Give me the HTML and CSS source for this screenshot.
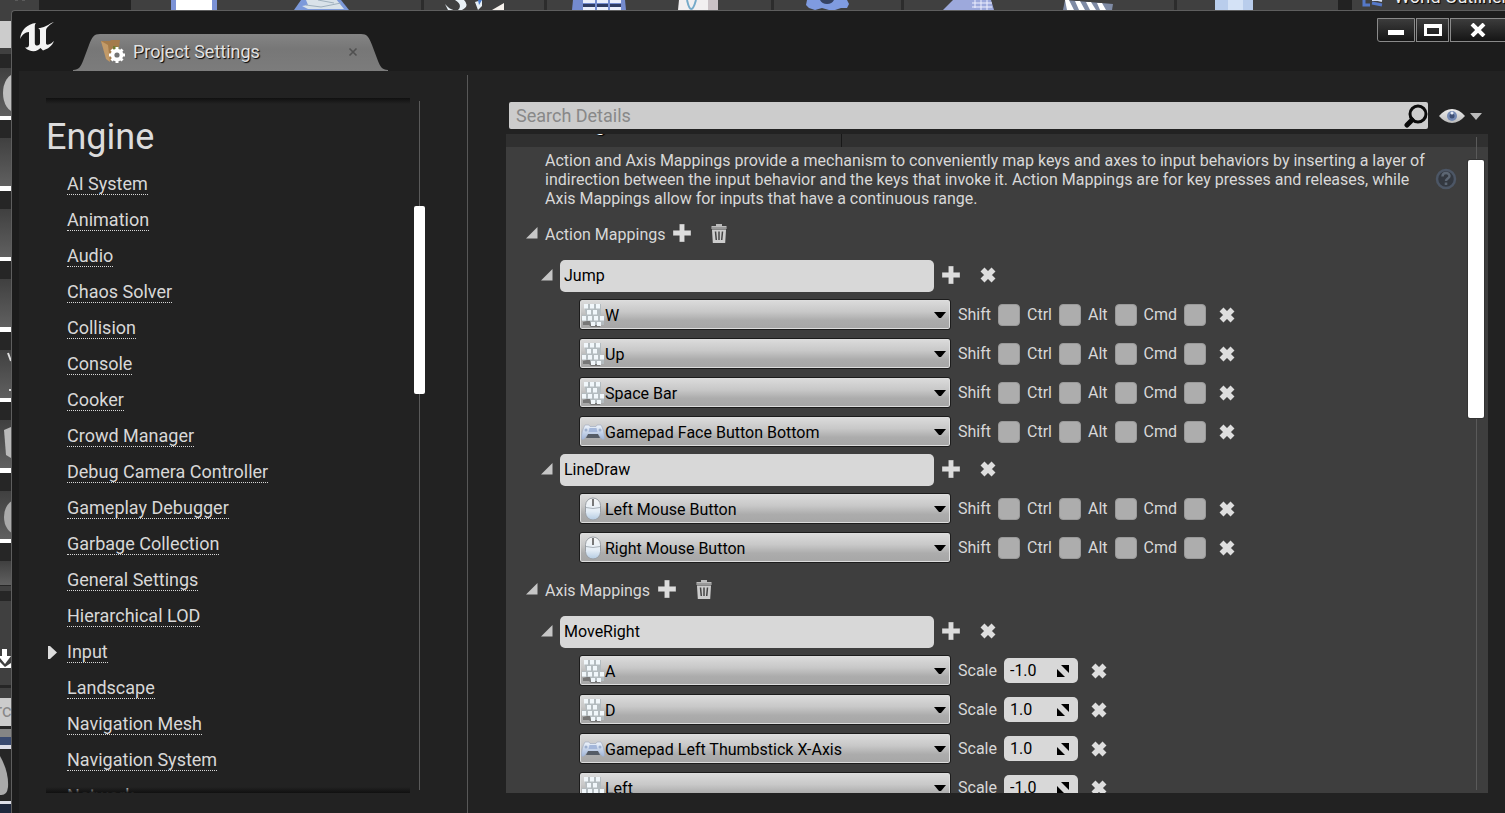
FILE: index.html
```html
<!DOCTYPE html>
<html lang="en">
<head>
<meta charset="utf-8">
<title>Project Settings</title>
<link rel="stylesheet" href="styles.css">
</head>
<body>
<svg class="defs" aria-hidden="true">
  <defs>
    <linearGradient id="g-pad" x1="0" y1="0" x2="0" y2="1"><stop offset="0" stop-color="#eef4fb"/><stop offset="1" stop-color="#9fb4d8"/></linearGradient>
    <linearGradient id="g-mouse" x1="0" y1="0" x2="0" y2="1"><stop offset="0" stop-color="#f6f6f6"/><stop offset=".6" stop-color="#e4edf6"/><stop offset="1" stop-color="#b4cbe2"/></linearGradient>
    <linearGradient id="g-tile" x1="0" y1="0" x2="0" y2="1"><stop offset="0" stop-color="#404040"/><stop offset="1" stop-color="#606060"/></linearGradient>
    <linearGradient id="g-eye" x1="0" y1="0" x2="0" y2="1"><stop offset="0" stop-color="#eee"/><stop offset="1" stop-color="#b9b9b9"/></linearGradient>
    <linearGradient id="g-tab" x1="0" y1="0" x2="0" y2="1"><stop offset="0" stop-color="#848484"/><stop offset=".4" stop-color="#777"/><stop offset="1" stop-color="#7c7c7c"/></linearGradient>
  </defs>
  <symbol id="plus" viewBox="0 0 17 17"><path d="M6 0h5v6h6v5h-6v6H6v-6H0V6h6z" fill="#dcdcdc" stroke="#333" stroke-opacity=".5" stroke-width=".6"/></symbol>
  <symbol id="cross" viewBox="0 0 16 16"><path d="M2.500 2.500 13.500 13.500M13.500 2.500 2.500 13.500" stroke="#dedede" stroke-width="5.600"/></symbol>
  <symbol id="trash" viewBox="0 0 16 19"><path d="M5 0h6v2h4.500v3H.5V2H5z" fill="#bbb"/><path d="M1 5.500h14L14.200 19H1.800z" fill="#ccc"/><path d="M0 4h16" stroke="#777"/><path d="M4.500 7.500 5.300 16M8 7.500V16M11.500 7.500 10.700 16" stroke="#444" stroke-width="1.500"/></symbol>
  <symbol id="open" viewBox="0 0 12 12"><path d="M11.500 0V11.500H0z" fill="#c6c6c6"/></symbol>
  <symbol id="down" viewBox="0 0 12 8"><path d="M0 1h12L7 7H5z" fill="#000"/></symbol>
  <symbol id="keys" viewBox="0 0 22 24">
    <path d="M1 19l8-2 10 3-1 4H9l-2-2H1z" fill="#777"/>
    <path d="M2 1h17v15h3v6H9l-1-4H0v-6h4z" fill="#b4bcc0"/>
    <g fill="#f1f7fb"><rect x="2" y="1" width="4" height="4.500"/><rect x="8" y="1" width="4" height="4.500"/><rect x="14" y="1" width="4" height="4.500"/><rect x="5" y="7" width="4" height="4.500"/><rect x="11" y="7" width="4" height="4.500"/><rect x="0" y="13" width="4" height="4.500"/><rect x="6" y="13" width="4" height="4.500"/><rect x="12" y="13" width="4" height="4.500"/><rect x="18" y="13" width="4" height="4.500"/><rect x="9" y="19" width="4" height="4"/><rect x="15" y="19" width="4" height="4"/></g>
  </symbol>
  <symbol id="pad" viewBox="0 0 24 18"><path d="M4 2h4l1 1.500h6L16 2h4c2 3 4 10 3.500 14-1.500 1.500-3.500 0-5-3H5.500C4 16 2 17.500.5 16 0 12 2 5 4 2z" fill="url(#g-pad)" stroke="#a3aec0" stroke-width=".7"/><path d="M7 11h10l2 4H5z" fill="#555c66"/><path d="M8.500 5h7l1 4h-9z" fill="#a4b7da"/><circle cx="5" cy="7" r="1.500" fill="#9dafcd"/><circle cx="19" cy="7" r="1.500" fill="#9dafcd"/></symbol>
  <symbol id="mouse" viewBox="0 0 18 24"><rect x="1.500" y="1" width="15" height="22" rx="7.500" fill="url(#g-mouse)" stroke="#9a9fa5"/><path d="M2 10.500q7 2 14 0" fill="none" stroke="#a9b1b9"/><path d="M9 2v7" stroke="#777" stroke-width="2"/></symbol>
  <symbol id="drag" viewBox="0 0 12 12"><path d="M4 0H12v8zM0 4l8 8H0z" fill="#000"/></symbol>
</svg>

<div class="desktop">
  <header class="toolbar">
    <svg class="toolbar-icons" width="1338" height="10" aria-hidden="true">
      <path d="M39 0h92v10H39z" fill="#222"/>
      <path d="M15 0h3M22 0h3" stroke="#777"/>
      <path d="M421 0h3v10h-3zM544 0h3v10h-3zM771 0h3v10h-3zM901 0h3v10h-3zM1174 0h3v10h-3z" fill="#2c2c2c"/>
      <path d="M171 0h46v10h-46z" fill="#7b92d6"/><path d="M176 0h36v10h-36z" fill="#fff"/>
      <path d="M301 0h40l8 10h-55z" fill="#7c99da"/><path d="M306 0l30-1 8 10h-36l-6-3 6-1z" fill="#d9e2e9"/><path d="M306 5l15 2 20-4M318 0l16 3" stroke="#9fb0bd" fill="none"/>
      <path d="M445 4q6 7 11 6h-8zM455 0l9 0q6 6-2 10h-4q5-5-3-10zM475 2l7-2v6l-4 4z" fill="#e8f0f5"/><path d="M492 10l12-7v7z" fill="#f8f3ee"/><path d="M478 0h4l-3 5z" fill="#4a7bcb"/>
      <path d="M573 0h52l1 10h-54z" fill="#748bcf"/><path d="M583 0h12v3h-12zM597 0h11v3h-11zM610 0h11v3h-11zM583 7h12v3h-12zM597 7h11v3h-11zM610 7h11v3h-11z" fill="#e9edfb"/><path d="M583 4h12v3h-12zM597 4h11v3h-11zM610 4h11v3h-11z" fill="#2e3b63"/>
      <path d="M679 0h39v10h-40z" fill="#f1eff0"/><path d="M708 0h10v10h-10z" fill="#c9c1c5"/><path d="M687 0q4 18 9 0" fill="none" stroke="#75aac9" stroke-width="2"/>
      <path d="M807 0h40l2 4-2 4h-6l-6 2h-6l-7-2-7 2-6-2-3-3z" fill="#7f9be0"/><path d="M820 0h14q-2 4-7 4t-7-4z" fill="#354262"/>
      <path d="M953 0h38l3 10h-51z" fill="#9da9dc"/><path d="M972 3h20M975 0v8M981 0v10M987 0v10M972 7h20" stroke="#eef0ff"/>
      <path d="M1065 0l48 4-1 6h-49z" fill="#7f8ba5"/><path d="M1065 0h4l5 10h-7zM1075 1h5l5 9h-6zM1086 2h5l5 8h-6zM1097 3h5l4 7h-6z" fill="#fff"/>
      <path d="M1215 0h38v10h-38z" fill="#b9cdec"/><path d="M1228 0h15v10h-15z" fill="#d4e2f6"/>
    </svg>
    <div class="outliner">
      <svg width="22" height="10" aria-hidden="true"><path d="M2 0v5h6M10 3l10 2" stroke="#5578c8" stroke-width="3" fill="none"/><path d="M10 0h6l4 1" stroke="#d3dcf0" stroke-width="2" fill="none"/></svg>
      <span>World Outliner</span>
    </div>
  </header>

  <aside class="palette">
    <svg width="11" height="803" aria-hidden="true">
      <path d="M0 0h11v803H0z" fill="#262626"/>
      <path d="M0 0h11v11H0zM0 38h11v6H0z" fill="#404040"/><path d="M0 11h11v27H0z" fill="#ccc"/>
      <g fill="url(#g-tile)"><rect y="58" width="11" height="48"/><rect y="128" width="11" height="48"/><rect y="199" width="11" height="48"/><rect y="269" width="11" height="48"/><rect y="340" width="11" height="48"/><rect y="410" width="11" height="48"/><rect y="481" width="11" height="48"/><rect y="551" width="11" height="24"/></g>
      <path d="M0 106h11v4H0zM0 176h11v5H0zM0 247h11v4H0zM0 317h11v5H0zM0 388h11v4H0zM0 458h11v5H0zM0 529h11v4H0z" fill="#fff"/>
      <ellipse cx="15" cy="83" rx="12" ry="19" fill="#bdbdbd"/><ellipse cx="16" cy="507" rx="12" ry="17" fill="#aaa"/>
      <path d="M4 420l7-3v31l-5-3z" fill="#b9b9b9"/><path d="M8 343l3 8M9 380h2" stroke="#ddd" stroke-width="2"/>
      <path d="M0 576h11v5H0zM0 591h11v84H0zM0 678h11v10H0z" fill="#404040"/>
      <path d="M2 639h5v7h4l-6 8-5-6v-2h2zM0 652l5 5 6-4v5H0z" fill="#fff"/>
      <path d="M0 688h11v28H0z" fill="#ccc"/><text x="-4" y="707" class="palette-text">rc</text>
      <path d="M0 719h11v8H0z" fill="#858585"/><path d="M0 727h11v8H0z" fill="#3a4a70"/><path d="M0 735h11v4H0zM0 791h11v3H0z" fill="#dedee8"/>
      <path d="M0 746q9 16 8 31-1 9-8 8z" fill="#aaa"/><path d="M0 794h11v9H0z" fill="#1e273c"/>
    </svg>
  </aside>

  <main class="window">
    <div class="titlebar">
      <svg class="logo" viewBox="0 0 34 30" aria-label="Unreal Engine"><path d="M0 17C1 8 7 2 16 1 15 2 14.800 3 14.800 5v16c0 2 1 2.500 2.500 2.500S20 22.500 20 21V9c0-1.500-.5-2.500-2-3 3 0 5-.5 8-2 3-1.500 5-3 8-4-4 3-8 5-8 9v12c0 1.500 1 2 2.500 1.500 2-.5 4-2 5.500-3.500-2 5-6 8-11 9.500L20.500 26c-2 2-4 3.200-7 3.200-3 0-6-1.200-8.500-3.700C8 25.500 9 25 9 22.500V10C5 10 2 13 0 17z" fill="#f4f4f4"/></svg>
      <div class="tab">
        <svg width="28" height="37" aria-hidden="true"><path d="M0 37v-1c6 0 8-4 10-9l6-16C19 3 21 0 27 0h1v37z" fill="url(#g-tab)"/></svg>
        <div class="tab-body">
          <svg class="tab-icon" viewBox="0 0 25 23" aria-hidden="true"><path d="M0 1h9l1-1h9l-1 8-6 12-5 1z" fill="#a47b4b"/><path d="M0 1l7 4 2 17-4-3z" fill="#c29a68"/><path d="M12 6l6 1v4l-6 2z" fill="#6d7b32"/><g transform="translate(16 15)"><circle r="4.500" fill="none" stroke="#fff" stroke-width="3.600"/><path d="M0-8V8M-8 0H8M-5.500-5.500 5.500 5.500M5.500-5.500-5.500 5.500" stroke="#fff" stroke-width="3"/><circle r="2.600" fill="#747474"/></g></svg>
          <span class="tab-title">Project Settings</span>
          <button class="tab-close" aria-label="Close tab"><svg width="10" height="10" viewBox="0 0 10 10"><path d="M1.500 1.500l7 7M8.500 1.500l-7 7" stroke="#505050" stroke-width="1.600"/></svg></button>
        </div>
        <svg width="28" height="37" aria-hidden="true"><path d="M28 37v-1c-6 0-8-4-10-9l-6-16C9 3 7 0 1 0H0v37z" fill="url(#g-tab)"/></svg>
      </div>
      <div class="window-buttons">
        <button class="wb-min" aria-label="Minimize"><svg width="16" height="14" viewBox="0 0 16 14"><path d="M0 7h16v5H0z" fill="#fff"/></svg></button>
        <button class="wb-max" aria-label="Maximize"><svg width="18" height="14" viewBox="0 0 18 14"><path d="M0 1h18v12H0zM3 5v6h12V5z" fill="#fff" fill-rule="evenodd"/></svg></button>
        <button class="wb-close" aria-label="Close"><svg width="16" height="14" viewBox="0 0 16 14"><path d="M2 1l12 12M14 1L2 13" stroke="#fff" stroke-width="4"/></svg></button>
      </div>
    </div>

    <div class="content">
      <section class="sidebar">
        <nav class="nav" aria-label="Settings sections">
          <h1>Engine</h1>
          <ul>
            <li><a href="#">AI System</a></li>
            <li><a href="#">Animation</a></li>
            <li><a href="#">Audio</a></li>
            <li><a href="#">Chaos Solver</a></li>
            <li><a href="#">Collision</a></li>
            <li><a href="#">Console</a></li>
            <li><a href="#">Cooker</a></li>
            <li><a href="#">Crowd Manager</a></li>
            <li><a href="#">Debug Camera Controller</a></li>
            <li><a href="#">Gameplay Debugger</a></li>
            <li><a href="#">Garbage Collection</a></li>
            <li><a href="#">General Settings</a></li>
            <li><a href="#">Hierarchical LOD</a></li>
            <li class="current"><svg width="9" height="13" viewBox="0 0 9 13" aria-hidden="true"><path d="M0 0h2l7 6.500L2 13H0z" fill="#ddd"/></svg><a href="#" aria-current="page">Input</a></li>
            <li><a href="#">Landscape</a></li>
            <li><a href="#">Navigation Mesh</a></li>
            <li><a href="#">Navigation System</a></li>
            <li><a href="#">Network</a></li>
          </ul>
        </nav>
        <div class="scrollbar nav-scroll"><div class="thumb"></div></div>
      </section>

      <section class="details">
        <div class="search-row">
          <label class="search"><input type="search" placeholder="Search Details" aria-label="Search Details"><svg width="24" height="24" viewBox="0 0 24 24" aria-hidden="true"><circle cx="14" cy="10" r="8" fill="none" stroke="#0a0a0a" stroke-width="3"/><path d="M8 16l-5 5" stroke="#0a0a0a" stroke-width="5" stroke-linecap="round"/></svg></label>
          <button class="view" aria-label="View options"><svg width="26" height="16" viewBox="0 0 26 16"><path d="M0 8Q6 1 13 1t13 7q-6 7-13 7T0 8z" fill="url(#g-eye)"/><circle cx="13" cy="8" r="5" fill="#7489b3"/><circle cx="13" cy="8" r="2.500" fill="#3f5075"/><circle cx="13" cy="5" r="1.500" fill="#e6ecf7"/></svg><svg width="12" height="8" viewBox="0 0 12 8"><path d="M0 1h12L6 8z" fill="#bbb"/></svg></button>
        </div>

        <div class="panel">
          <div class="category"><h2>Bindings</h2></div>
          <div class="bindings">
            <div class="about">
              <p>Action and Axis Mappings provide a mechanism to conveniently map keys and axes to input behaviors by inserting a layer of indirection between the input behavior and the keys that invoke it. Action Mappings are for key presses and releases, while Axis Mappings allow for inputs that have a continuous range.</p>
              <button aria-label="Help"><svg width="22" height="24" viewBox="0 0 22 24"><circle cx="11" cy="11" r="9" fill="#333840" stroke="#4c5665" stroke-width="2.500"/><path d="M7.500 8.500c0-4.500 7-4.500 7-.5 0 2.500-3.500 2.500-3.500 5" fill="none" stroke="#5c6673" stroke-width="2.500"/><path d="M9.700 14.500h2.600v2.500H9.700z" fill="#5c6673"/></svg></button>
            </div>

            <div class="section"><button aria-label="Collapse Action Mappings"><svg width="12" height="12"><use href="#open"/></svg></button><h3>Action Mappings</h3><button class="add" aria-label="Add action mapping"><svg width="18" height="18"><use href="#plus"/></svg></button><button aria-label="Remove all action mappings"><svg width="16" height="19"><use href="#trash"/></svg></button></div>

            <div class="mapping"><button aria-label="Collapse Jump"><svg width="12" height="12"><use href="#open"/></svg></button><input type="text" value="Jump" aria-label="Action name"><button class="add" aria-label="Add key"><svg width="18" height="18"><use href="#plus"/></svg></button><button aria-label="Remove Jump"><svg width="16" height="16"><use href="#cross"/></svg></button></div>
            <div class="key"><div class="combo"><svg class="device" width="22" height="24"><use href="#keys"/></svg><select aria-label="Key"><option>W</option></select><svg class="arrow" width="12" height="8"><use href="#down"/></svg></div><label>Shift<input type="checkbox"></label><label>Ctrl<input type="checkbox"></label><label>Alt<input type="checkbox"></label><label>Cmd<input type="checkbox"></label><button aria-label="Remove key"><svg width="16" height="16"><use href="#cross"/></svg></button></div>
            <div class="key"><div class="combo"><svg class="device" width="22" height="24"><use href="#keys"/></svg><select aria-label="Key"><option>Up</option></select><svg class="arrow" width="12" height="8"><use href="#down"/></svg></div><label>Shift<input type="checkbox"></label><label>Ctrl<input type="checkbox"></label><label>Alt<input type="checkbox"></label><label>Cmd<input type="checkbox"></label><button aria-label="Remove key"><svg width="16" height="16"><use href="#cross"/></svg></button></div>
            <div class="key"><div class="combo"><svg class="device" width="22" height="24"><use href="#keys"/></svg><select aria-label="Key"><option>Space Bar</option></select><svg class="arrow" width="12" height="8"><use href="#down"/></svg></div><label>Shift<input type="checkbox"></label><label>Ctrl<input type="checkbox"></label><label>Alt<input type="checkbox"></label><label>Cmd<input type="checkbox"></label><button aria-label="Remove key"><svg width="16" height="16"><use href="#cross"/></svg></button></div>
            <div class="key"><div class="combo"><svg class="device" width="24" height="18"><use href="#pad"/></svg><select aria-label="Key"><option>Gamepad Face Button Bottom</option></select><svg class="arrow" width="12" height="8"><use href="#down"/></svg></div><label>Shift<input type="checkbox"></label><label>Ctrl<input type="checkbox"></label><label>Alt<input type="checkbox"></label><label>Cmd<input type="checkbox"></label><button aria-label="Remove key"><svg width="16" height="16"><use href="#cross"/></svg></button></div>

            <div class="mapping"><button aria-label="Collapse LineDraw"><svg width="12" height="12"><use href="#open"/></svg></button><input type="text" value="LineDraw" aria-label="Action name"><button class="add" aria-label="Add key"><svg width="18" height="18"><use href="#plus"/></svg></button><button aria-label="Remove LineDraw"><svg width="16" height="16"><use href="#cross"/></svg></button></div>
            <div class="key"><div class="combo"><svg class="device" width="18" height="24"><use href="#mouse"/></svg><select aria-label="Key"><option>Left Mouse Button</option></select><svg class="arrow" width="12" height="8"><use href="#down"/></svg></div><label>Shift<input type="checkbox"></label><label>Ctrl<input type="checkbox"></label><label>Alt<input type="checkbox"></label><label>Cmd<input type="checkbox"></label><button aria-label="Remove key"><svg width="16" height="16"><use href="#cross"/></svg></button></div>
            <div class="key"><div class="combo"><svg class="device" width="18" height="24"><use href="#mouse"/></svg><select aria-label="Key"><option>Right Mouse Button</option></select><svg class="arrow" width="12" height="8"><use href="#down"/></svg></div><label>Shift<input type="checkbox"></label><label>Ctrl<input type="checkbox"></label><label>Alt<input type="checkbox"></label><label>Cmd<input type="checkbox"></label><button aria-label="Remove key"><svg width="16" height="16"><use href="#cross"/></svg></button></div>

            <div class="section"><button aria-label="Collapse Axis Mappings"><svg width="12" height="12"><use href="#open"/></svg></button><h3>Axis Mappings</h3><button class="add" aria-label="Add axis mapping"><svg width="18" height="18"><use href="#plus"/></svg></button><button aria-label="Remove all axis mappings"><svg width="16" height="19"><use href="#trash"/></svg></button></div>

            <div class="mapping"><button aria-label="Collapse MoveRight"><svg width="12" height="12"><use href="#open"/></svg></button><input type="text" value="MoveRight" aria-label="Axis name"><button class="add" aria-label="Add key"><svg width="18" height="18"><use href="#plus"/></svg></button><button aria-label="Remove MoveRight"><svg width="16" height="16"><use href="#cross"/></svg></button></div>
            <div class="key"><div class="combo"><svg class="device" width="22" height="24"><use href="#keys"/></svg><select aria-label="Key"><option>A</option></select><svg class="arrow" width="12" height="8"><use href="#down"/></svg></div><label>Scale<span class="spin"><input type="text" value="-1.0"><svg width="12" height="12"><use href="#drag"/></svg></span></label><button aria-label="Remove key"><svg width="16" height="16"><use href="#cross"/></svg></button></div>
            <div class="key"><div class="combo"><svg class="device" width="22" height="24"><use href="#keys"/></svg><select aria-label="Key"><option>D</option></select><svg class="arrow" width="12" height="8"><use href="#down"/></svg></div><label>Scale<span class="spin"><input type="text" value="1.0"><svg width="12" height="12"><use href="#drag"/></svg></span></label><button aria-label="Remove key"><svg width="16" height="16"><use href="#cross"/></svg></button></div>
            <div class="key"><div class="combo"><svg class="device" width="24" height="18"><use href="#pad"/></svg><select aria-label="Key"><option>Gamepad Left Thumbstick X-Axis</option></select><svg class="arrow" width="12" height="8"><use href="#down"/></svg></div><label>Scale<span class="spin"><input type="text" value="1.0"><svg width="12" height="12"><use href="#drag"/></svg></span></label><button aria-label="Remove key"><svg width="16" height="16"><use href="#cross"/></svg></button></div>
            <div class="key"><div class="combo"><svg class="device" width="22" height="24"><use href="#keys"/></svg><select aria-label="Key"><option>Left</option></select><svg class="arrow" width="12" height="8"><use href="#down"/></svg></div><label>Scale<span class="spin"><input type="text" value="-1.0"><svg width="12" height="12"><use href="#drag"/></svg></span></label><button aria-label="Remove key"><svg width="16" height="16"><use href="#cross"/></svg></button></div>
          </div>
          <div class="scrollbar panel-scroll"><div class="thumb"></div></div>
        </div>
      </section>
    </div>
  </main>
</div>
</body>
</html>
```
FILE: styles.css
```css
* { box-sizing: border-box; }

body {
  margin: 0;
  background: #404040;
  color: #d8d8d8;
  font: 16px/19px Roboto, "Liberation Sans", sans-serif;
}

h1, h2, h3, p, ul { margin: 0; padding: 0; font-weight: 400; }
ul { list-style: none; }
svg { display: block; flex: none; }
button { display: flex; padding: 0; border: 0; background: none; color: inherit; font: inherit; }
input, select { margin: 0; font: inherit; }

.defs { position: absolute; width: 0; height: 0; }

.desktop {
  display: grid;
  grid-template: 10px minmax(0, 1fr) / 11px minmax(0, 1fr);
  height: 100vh;
  overflow: hidden;
}

/* Level editor behind the window */
.toolbar { grid-column: 1 / -1; display: flex; overflow: hidden; background: #404040; }
.outliner {
  display: flex;
  gap: 10px;
  flex: 1;
  min-width: 0;
  padding-left: 10px;
  border-left: 14px solid #222;
  overflow: hidden;
  white-space: nowrap;
  color: #eee;
  font-size: 18px;
  line-height: 0;
  text-shadow: 1px 1px 1px #000;
}
.outliner span { margin-top: -3px; }
.palette { overflow: hidden; }
.palette-text { font: 18px Roboto, sans-serif; fill: #888; }

/* Window frame */
.window {
  display: flex;
  flex-direction: column;
  min-height: 0;
  padding-left: 7px;
  border: solid #5e5e5e;
  border-width: 1px 0 0 1px;
  border-top-left-radius: 4px;
  background: #1c1c1c;
}
.titlebar { display: flex; flex: none; height: 60px; }
.logo { width: 34px; height: 30px; margin: 11px 0 0 1px; }
.tab { display: flex; align-self: flex-end; margin-left: 19px; }
.tab-body {
  display: flex;
  align-items: center;
  width: 259px;
  height: 37px;
  padding-bottom: 2px;
  background: linear-gradient(#848484, #777 40%, #7c7c7c);
}
.tab-icon { width: 25px; height: 23px; }
.tab-title { margin-left: 7px; color: #e2e2e2; font-size: 18px; text-shadow: 1px 1px 1px #000; }
.tab-close { margin-left: auto; margin-right: 2px; }
.window-buttons { display: flex; gap: 1px; height: 24px; margin: 7px 0 0 auto; }
.window-buttons button {
  align-items: center;
  justify-content: center;
  border: 1px solid #8a8a8a;
  background: linear-gradient(#3c3c3c, #151515);
}
.wb-min { width: 38px; border-bottom-left-radius: 3px; }
.wb-max { width: 33px; }
.window-buttons .wb-close { width: 55px; border-right: 0; }

.content { display: flex; flex: 1; min-height: 0; background: #222; }

/* Section list */
.sidebar {
  display: flex;
  flex: none;
  width: 449px;
  margin-top: 4px;
  padding: 23px 42px 20px 27px;
  border-right: 1px solid #585858;
}
.nav { position: relative; flex: 1; overflow: hidden; }
.nav::before, .nav::after {
  content: "";
  position: absolute;
  z-index: 1;
  left: 0;
  right: 0;
  top: 0;
  height: 6px;
  background: linear-gradient(#101010, #10101000);
}
.nav::after { top: auto; bottom: 0; background: linear-gradient(#10101000, #101010); }
.nav h1 { padding-top: 15px; height: 68px; color: #dcdcdc; font-size: 36px; line-height: 48px; }
.nav li { display: flex; align-items: center; height: 36px; padding-left: 21px; }
.nav a {
  border-bottom: 1px dotted #d8d8d8;
  color: #d8d8d8;
  font-size: 18px;
  line-height: 20px;
  text-decoration: none;
}
.nav .current { gap: 10px; padding-left: 2px; }

.scrollbar { flex: none; background: linear-gradient(#5a5a5a, #5a5a5a) center / 1px 100% no-repeat; }
.scrollbar .thumb { border-radius: 2px; background: #fff; }
.nav-scroll { width: 11px; margin: 3px 0 3px 4px; padding-top: 105px; }
.nav-scroll .thumb { height: 188px; }

/* Details */
.details { display: flex; flex: 1; flex-direction: column; min-width: 0; padding: 31px 17px 20px 38px; }
.search-row { display: flex; align-items: center; gap: 11px; margin: 0 6px 5px 3px; }
.search { display: flex; flex: 1; align-items: center; height: 27px; border-radius: 2px; background: #ccc; }
.search input {
  flex: 1;
  min-width: 0;
  padding: 0 7px;
  border: 0;
  outline: 0;
  background: none;
  appearance: none;
  font-size: 18px;
}
.search input::placeholder { color: #888; }
.view { align-items: center; gap: 5px; }

.panel {
  display: grid;
  flex: 1;
  grid-template: 13px minmax(0, 1fr) / minmax(0, 1fr) 24px;
  min-height: 0;
  overflow: hidden;
  background: #3e3e3e;
}
.category {
  display: flex;
  align-items: flex-end;
  grid-column: 1 / -1;
  grid-row: 1;
  overflow: hidden;
  padding-left: 38px;
  background: linear-gradient(90deg, #181818, #181818) 335px 0 / 1px 100% no-repeat #303030;
}
.category h2 { margin-bottom: 10px; color: #fff; font-size: 18px; font-weight: 700; line-height: 24px; text-shadow: 1px 1px 1px #000; }
.bindings { grid-column: 1; grid-row: 2; overflow: hidden; }
.panel-scroll { grid-column: 2; grid-row: 1 / -1; margin: 3px 4px; padding-top: 23px; }
.panel-scroll .thumb { height: 258px; box-shadow: 0 0 0 1px #333; }

.about { display: flex; gap: 8px; padding: 4px 7px 3px 39px; }
.about p { flex: 1; }
.about button { align-self: center; }

.section, .mapping, .key { display: flex; align-items: center; white-space: nowrap; }
.section { height: 46px; padding-left: 20px; }
.section h3 { margin-left: 7px; font-size: 16px; }
.section button, .mapping button { padding-bottom: 2px; }
.add { margin: 0 20px 0 8px; }

.mapping { height: 38px; padding-left: 35px; }
.mapping input {
  width: 374px;
  height: 32px;
  margin-left: 7px;
  padding: 0 4px 2px;
  border: 0;
  border-radius: 5px;
  background: #d8d8d8;
  color: #000;
}

.key { gap: 7px; height: 39px; padding-left: 73px; }
.combo {
  display: grid;
  grid-template-columns: 26px 1fr 16px;
  align-items: center;
  width: 372px;
  height: 31px;
  border: 1px solid #1c1c1c;
  border-radius: 3px;
  background: linear-gradient(#dcdcdc, #c8c8c8 40%, #acacac 70%, #a6a6a6);
  box-shadow: inset 0 0 0 1px #ddd;
}
.combo > * { grid-row: 1; }
.combo select {
  grid-column: 1 / -1;
  width: 100%;
  height: 29px;
  padding: 2px 18px 0 25px;
  border: 0;
  background: none;
  color: #000;
  appearance: none;
}
.combo svg { z-index: 1; pointer-events: none; }
.device { grid-column: 1; justify-self: center; }
.arrow { grid-column: 3; }

.key label { display: flex; align-items: center; gap: 7px; }
.key input[type="checkbox"] {
  width: 22px;
  height: 22px;
  border: 1px solid #999;
  border-radius: 4px;
  background: #adadad;
  appearance: none;
}
.key > button { margin-left: 6px; }

.spin { display: flex; align-items: center; width: 74px; height: 25px; padding: 0 9px 0 6px; border-radius: 5px; background: #d8d8d8; }
.spin input { flex: 1; min-width: 0; padding: 0; border: 0; background: none; color: #000; }
```
